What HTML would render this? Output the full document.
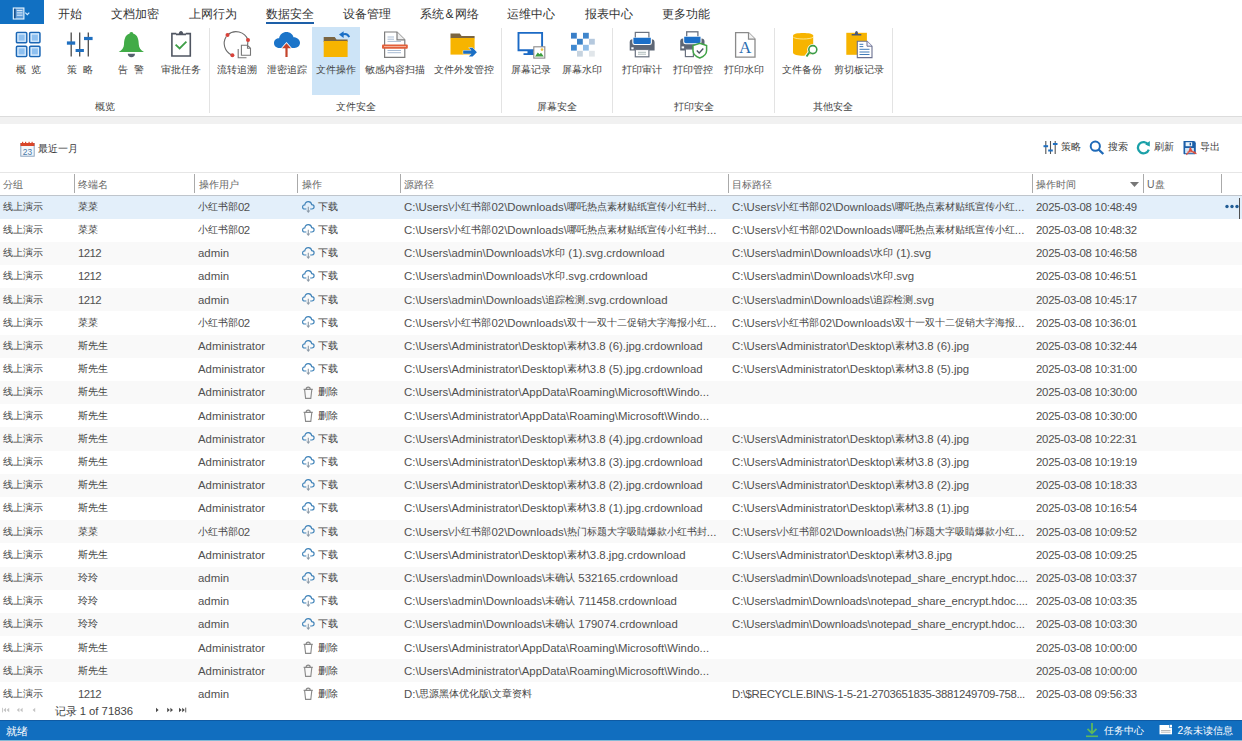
<!DOCTYPE html>
<html><head><meta charset="utf-8">
<style>
html,body{margin:0;padding:0}
body{width:1242px;height:741px;position:relative;overflow:hidden;background:#fff;font-family:"Liberation Sans",sans-serif;color:#333;}
.a{position:absolute;white-space:nowrap}
.menu{position:absolute;top:1.5px;font-size:12px;line-height:25px;color:#333;white-space:nowrap}
.rl{position:absolute;top:62.5px;font-size:10.4px;line-height:14px;color:#444;white-space:nowrap;text-align:center}
.gl{position:absolute;top:99.5px;font-size:10.4px;line-height:14px;color:#444;white-space:nowrap;text-align:center}
.sep{position:absolute;top:28px;width:1px;height:85px;background:#e3e3e3}
.ic{position:absolute}
.tb{position:absolute;top:141.5px;font-size:10.35px;line-height:14px;color:#3c3c3c;white-space:nowrap}
.hd{position:absolute;top:177.5px;font-size:10.4px;line-height:14px;color:#666;white-space:nowrap}
.hs{position:absolute;top:173.8px;width:1px;height:19px;background:#aaa}
.r{position:absolute;left:0;width:1242px;height:23.2px}
.r.alt{background:#f9f9f9}
.r.sel{background:#e3effa}
.c{position:absolute;top:4.4px;font-size:11.4px;line-height:14px;color:#505050;white-space:nowrap}
.c i{color:#454545;font-style:normal;font-size:10.35px;line-height:0;position:relative;top:-1px;letter-spacing:0}
.c.n{letter-spacing:-0.6px}
.c.dt{letter-spacing:-0.26px}
.r svg{position:absolute;left:302px;top:5px}
.r svg.dots{position:absolute;left:1224.5px;top:8.5px}
.focus{position:absolute;left:1238.8px;top:2px;width:1.3px;height:21.5px;background:#505050}
</style></head><body>
<!-- top menu -->
<div class="a" style="left:0;top:0;width:44px;height:23.8px;background:#1170c2"></div>
<svg class="a" style="left:12px;top:6.5px" width="20" height="13" viewBox="0 0 20 13">
 <rect x="1.3" y="1" width="10.6" height="11" fill="#5d9bd8" stroke="#e8f6ff" stroke-width="1.1"/>
 <rect x="2.2" y="1.7" width="1.3" height="9.6" fill="#0b3f78"/>
 <line x1="4.8" y1="3.6" x2="10.5" y2="3.6" stroke="#e0eefc" stroke-width="1"/>
 <line x1="4.8" y1="5.9" x2="10.5" y2="5.9" stroke="#e0eefc" stroke-width="1"/>
 <line x1="4.8" y1="8.2" x2="10.5" y2="8.2" stroke="#e0eefc" stroke-width="1"/>
 <path d="M13.3 5.6 L15.3 7.6 L17.3 5.6" fill="none" stroke="#cfe8ff" stroke-width="1.2"/>
</svg>
<span class="menu" style="left:58px">开始</span>
<span class="menu" style="left:111px">文档加密</span>
<span class="menu" style="left:189px">上网行为</span>
<span class="menu" style="left:266px">数据安全</span>
<div class="a" style="left:266px;top:21.5px;width:48px;height:2px;background:#1d5fa8"></div>
<span class="menu" style="left:343px">设备管理</span>
<span class="menu" style="left:420px">系统<span style="margin:0 1.6px">&amp;</span>网络</span>
<span class="menu" style="left:507px">运维中心</span>
<span class="menu" style="left:585px">报表中心</span>
<span class="menu" style="left:662px">更多功能</span>

<!-- ribbon -->
<div class="a" style="left:312.3px;top:26.6px;width:48px;height:68.7px;background:#cde4f7"></div>
<div class="sep" style="left:208.5px"></div>
<div class="sep" style="left:501px"></div>
<div class="sep" style="left:612px"></div>
<div class="sep" style="left:774px"></div>
<div class="sep" style="left:892px"></div>
<!-- icons -->
<svg class="ic" style="left:15px;top:31px" width="27" height="27" viewBox="0 0 27 27">
 <g fill="#8ec0f0" stroke="#1b66b4" stroke-width="1.4">
  <rect x="1.4" y="1.4" width="10.4" height="10.4" rx="1"/><rect x="14.6" y="1.4" width="10.4" height="10.4" rx="1"/>
  <rect x="1.4" y="15.2" width="10.4" height="10.4" rx="1"/><rect x="14.6" y="15.2" width="10.4" height="10.4" rx="1"/>
 </g>
 <g fill="none" stroke="#e8f3fd" stroke-width="1">
  <rect x="3" y="3" width="7.2" height="7.2"/><rect x="16.2" y="3" width="7.2" height="7.2"/>
  <rect x="3" y="16.8" width="7.2" height="7.2"/><rect x="16.2" y="16.8" width="7.2" height="7.2"/>
 </g>
</svg>
<svg class="ic" style="left:66px;top:32px" width="27" height="25" viewBox="0 0 27 25">
 <g stroke="#4a4a4a" stroke-width="1.3"><line x1="5.2" y1="0.5" x2="5.2" y2="24.4"/><line x1="13.7" y1="0.5" x2="13.7" y2="24.4"/><line x1="22.3" y1="0.5" x2="22.3" y2="24.4"/></g>
 <g fill="#1f6fc0"><rect x="0.9" y="9.4" width="8.3" height="3.3"/><rect x="9.6" y="17" width="8.3" height="3"/><rect x="18" y="4.9" width="8.6" height="3.2"/></g>
</svg>
<svg class="ic" style="left:118px;top:31px" width="27" height="27" viewBox="0 0 27 27">
 <path d="M13.4 1 C14.6 1 15.3 1.8 15.3 2.8 C19.8 4 20.6 8.5 20.8 13.5 C21 17 22.5 19 26 21.1 L0.7 21.1 C4.2 19 5.8 17 6 13.5 C6.2 8.5 7 4 11.5 2.8 C11.5 1.8 12.2 1 13.4 1 Z" fill="#41ab47"/>
 <path d="M9.8 22.8 L17 22.8 C17 25 15.5 26.2 13.4 26.2 C11.3 26.2 9.8 25 9.8 22.8 Z" fill="#55606e"/>
</svg>
<svg class="ic" style="left:170px;top:30px" width="22" height="28" viewBox="0 0 22 28">
 <path d="M6.3 3.6 H1.9 V26 H20.3 V3.6 H15.8" fill="none" stroke="#4f5561" stroke-width="1.6"/>
 <path d="M6 5.3 V3.5 H8.8 C9 2.2 9.8 1 11 1 C12.2 1 13 2.2 13.2 3.5 H16 V5.3 Z" fill="#4f5561"/>
 <path d="M5.6 14.6 L9.6 18.4 L16.4 11.6" fill="none" stroke="#3e9e47" stroke-width="1.8"/>
</svg>
<svg class="ic" style="left:222px;top:30px" width="30" height="29" viewBox="0 0 30 29">
 <path d="M5.5 5 A12.7 12.7 0 0 1 26 10" fill="none" stroke="#6b6b6b" stroke-width="1.1"/>
 <path d="M4.3 6.5 A12.7 12.7 0 0 0 9.6 25" fill="none" stroke="#6b6b6b" stroke-width="1.1"/>
 <path d="M26 10 L25.6 15" fill="none" stroke="#6b6b6b" stroke-width="1.1"/>
 <g fill="#d8423a"><circle cx="5.5" cy="5" r="2"/><circle cx="26" cy="10.1" r="2"/><circle cx="10.4" cy="25.3" r="2"/></g>
 <path d="M16.2 19 V27.8 H24.5" fill="none" stroke="#777" stroke-width="1.1"/>
 <path d="M19.4 15.2 H25.5 L28.5 18.2 V25.3 H19.4 Z M25.5 15.2 V18.2 H28.5" fill="#fff" stroke="#777" stroke-width="1.1"/>
</svg>
<svg class="ic" style="left:273px;top:31px" width="28" height="27" viewBox="0 0 28 27">
 <path d="M6.5 17 C2.8 17 1 14.6 1 12 C1 9.2 3.2 7 6.1 7.2 C6.8 3.4 9.8 1 13.5 1 C17 1 19.6 3.2 20.5 6.2 C24.2 6.2 27 8.7 27 11.8 C27 14.8 24.6 17 21.5 17 Z" fill="#1b74c9"/>
 <path d="M13.5 11 L19.5 17.8 L15.4 17.8 L15.4 26.5 L11.6 26.5 L11.6 17.8 L7.5 17.8 Z" fill="#fff"/>
 <path d="M13.5 12.3 L18 17.3 L14.6 17.3 L14.6 26 L12.4 26 L12.4 17.3 L9 17.3 Z" fill="#c4442b"/>
</svg>
<svg class="ic" style="left:322px;top:30px" width="30" height="28" viewBox="0 0 30 28">
 <path d="M1.7 6.9 H12.7 L14.5 9.6 H25.6 V12 H1.7 Z" fill="#7b6541"/>
 <rect x="1.7" y="11" width="23.9" height="16" fill="#f7b400"/>
 <path d="M27.2 7.2 C26.2 4.5 23.5 3.5 20.5 4.5" fill="none" stroke="#1b6fc6" stroke-width="1.9"/>
 <path d="M17 4.6 L21.6 1.2 L21.6 8 Z" fill="#1b6fc6"/>
</svg>
<svg class="ic" style="left:381px;top:31px" width="28" height="28" viewBox="0 0 28 28">
 <path d="M3.6 1 H16 L23.8 8.8 V26.3 H3.6 Z" fill="#fff" stroke="#7d7d7d" stroke-width="1.2"/>
 <path d="M16 1 V8.8 H23.8" fill="#eee" stroke="#7d7d7d" stroke-width="1.2"/>
 <g stroke="#a9bcd3" stroke-width="1"><line x1="6.5" y1="6" x2="13" y2="6"/><line x1="6.5" y1="8.2" x2="13" y2="8.2"/><line x1="6.5" y1="10.4" x2="20" y2="10.4"/><line x1="6.5" y1="19.5" x2="20" y2="19.5"/><line x1="6.5" y1="21.7" x2="20" y2="21.7"/></g>
 <rect x="1" y="13.4" width="25.8" height="4.3" rx="1" fill="#e2603b"/>
 <line x1="3" y1="15.5" x2="25" y2="15.5" stroke="#f4b9a5" stroke-width="0.9"/>
</svg>
<svg class="ic" style="left:449px;top:32px" width="30" height="27" viewBox="0 0 30 27">
 <path d="M1.5 1.6 H10.8 L12.6 4 H25.6 V6.2 H1.5 Z" fill="#7b6541"/>
 <rect x="1.5" y="6" width="24.1" height="16.6" fill="#f7b400"/>
 <path d="M14.2 18.6 H22.5 L19.8 15.8 H23.6 L27.9 20.2 L23.6 24.6 H19.8 L22.5 21.8 H14.2 Z" fill="#1b6fc6" stroke="#fff" stroke-width="0.9" paint-order="stroke"/>
</svg>
<svg class="ic" style="left:516px;top:31px" width="30" height="28" viewBox="0 0 30 28">
 <path d="M2.5 1.9 H26.1 V19.2 H2.5 Z" fill="#fff" stroke="#1b6ac5" stroke-width="1.9"/>
 <rect x="11.5" y="19" width="6" height="4" fill="#1b6ac5"/>
 <rect x="7.5" y="22.2" width="11" height="1.8" fill="#1b6ac5"/>
 <rect x="17.8" y="15.8" width="11" height="11.3" fill="#fff" stroke="#8a8a8a" stroke-width="1.1"/>
 <path d="M19 25.6 L21.8 21.5 L23.5 23.3 L25 21.8 L27.8 25.6 Z" fill="#3e9e3e"/>
 <circle cx="26" cy="18.6" r="1.3" fill="#f0c040"/>
</svg>
<svg class="ic" style="left:570px;top:32px" width="26" height="26" viewBox="0 0 26 26">
 <rect x="1" y="0.8" width="5.8" height="5.8" fill="#3a7fc8"/><rect x="13" y="0.8" width="5.8" height="5.8" fill="#3f86cc"/>
 <rect x="7" y="6.8" width="5.8" height="5.8" fill="#3a82c8"/><rect x="19" y="6.8" width="5.8" height="5.8" fill="#b5c9de"/>
 <rect x="1" y="12.8" width="5.8" height="5.8" fill="#4089d0"/><rect x="13" y="12.8" width="5.8" height="5.8" fill="#8fbde8"/>
 <rect x="7" y="18.8" width="5.8" height="5.8" fill="#c6d3df"/><rect x="19" y="18.8" width="5.8" height="5.8" fill="#e1e6ea"/>
</svg>
<svg class="ic" style="left:628px;top:31px" width="28" height="27" viewBox="0 0 28 27">
 <rect x="7.3" y="1.4" width="13.6" height="7" fill="#fff" stroke="#6a7280" stroke-width="1.2"/>
 <path d="M1.7 11.5 Q1.7 8.3 4.5 8.3 H23.5 Q26.6 8.3 26.6 11.5 V19.6 H1.7 Z" fill="#5d6675"/>
 <path d="M4.3 6.6 H23.9 V11.8 Q23.9 14 21.6 14 H6.6 Q4.3 14 4.3 11.8 Z" fill="#fff"/>
 <path d="M5.4 6.7 H22.8 V11.5 Q22.8 13 21.3 13 H6.9 Q5.4 13 5.4 11.5 Z" fill="#1b6fc8"/>
 <rect x="3.3" y="16.3" width="2.3" height="2" fill="#fff"/>
 <rect x="7.3" y="18.5" width="13.6" height="7.3" fill="#fff" stroke="#6a7280" stroke-width="1.2"/>
 <line x1="10" y1="21.3" x2="18" y2="21.3" stroke="#9aa" stroke-width="0.8"/><line x1="10" y1="23.2" x2="18" y2="23.2" stroke="#9aa" stroke-width="0.8"/>
</svg>
<svg class="ic" style="left:679px;top:30px" width="30" height="29" viewBox="0 0 30 29">
 <rect x="7.7" y="1.8" width="11.2" height="7" fill="#fff" stroke="#6a7280" stroke-width="1.3"/>
 <path d="M1.2 11.5 Q1.2 8.6 3.8 8.6 H22.6 Q25.5 8.6 25.5 11.5 V20.6 H1.2 Z" fill="#5d6675"/>
 <path d="M4.2 6.3 H22.5 V12 Q22.5 14.3 20.2 14.3 H6.5 Q4.2 14.3 4.2 12 Z" fill="#fff"/>
 <path d="M5.2 6.8 H21.5 V11.6 Q21.5 13.3 19.8 13.3 H6.9 Q5.2 13.3 5.2 11.6 Z" fill="#1b6fc8"/>
 <rect x="2.6" y="16.4" width="2.5" height="2" fill="#fff"/>
 <rect x="6.4" y="19" width="8" height="7.6" fill="#fff" stroke="#6a7280" stroke-width="1.2"/>
 <path d="M20.8 13.2 L27.6 15.6 V20.5 C27.6 24.2 25 26.4 20.8 28 C16.6 26.4 14 24.2 14 20.5 V15.6 Z" fill="#fff" stroke="#41a447" stroke-width="1.5"/>
 <path d="M17.8 20.6 L20.2 23 L24.3 18.6" fill="none" stroke="#4b5462" stroke-width="1.4"/>
</svg>
<svg class="ic" style="left:734px;top:31px" width="23" height="28" viewBox="0 0 23 28">
 <path d="M1.6 1.6 H14.5 L21 8.1 V26.1 H1.6 Z" fill="#fff" stroke="#8a8a8a" stroke-width="1.3"/>
 <path d="M14.5 1.6 V8.1 H21" fill="#f2f2f2" stroke="#8a8a8a" stroke-width="1.2"/>
 <text x="11.2" y="22" text-anchor="middle" font-family="Liberation Serif" font-size="17" fill="#2a6cb0">A</text>
</svg>
<svg class="ic" style="left:791px;top:31px" width="30" height="28" viewBox="0 0 30 28">
 <path d="M2 4.5 C2 1.2 22.2 1.2 22.2 4.5 V21.5 C22.2 25.8 2 25.8 2 21.5 Z" fill="#f7b400"/>
 <path d="M2.3 6.2 C5 8.6 19.2 8.6 22 6.2" fill="none" stroke="#fde68a" stroke-width="1"/>
 <line x1="18.3" y1="21.5" x2="14.8" y2="26.2" stroke="#fff" stroke-width="3.6"/>
 <circle cx="21.8" cy="18.6" r="5.6" fill="#fff"/>
 <line x1="18.3" y1="21.5" x2="15.5" y2="25.5" stroke="#3c9c46" stroke-width="2"/>
 <circle cx="21.8" cy="18.6" r="4" fill="#fff" stroke="#3c9c46" stroke-width="1.6"/>
</svg>
<svg class="ic" style="left:845px;top:30px" width="29" height="29" viewBox="0 0 29 29">
 <rect x="1.3" y="2.8" width="20.6" height="22" fill="#f7b400"/>
 <path d="M6.7 5.6 V4 H9.8 C10 2.2 10.7 1 11.5 1 C12.3 1 13 2.2 13.2 4 H16.3 V5.6 Z" fill="#4a5878"/>
 <path d="M12.3 11.2 H22 L27 16.2 V27.6 H12.3 Z" fill="#fff" stroke="#6a7090" stroke-width="1.1"/>
 <path d="M22 11.2 V16.2 H27" fill="#eef" stroke="#6a7090" stroke-width="1"/>
 <g stroke="#2a6cb0" stroke-width="0.9"><line x1="14.5" y1="14.3" x2="18.3" y2="14.3"/><line x1="14.5" y1="16.6" x2="18.3" y2="16.6"/><line x1="14.5" y1="19.3" x2="24.5" y2="19.3"/><line x1="14.5" y1="22" x2="24.5" y2="22"/><line x1="14.5" y1="24.5" x2="24.5" y2="24.5"/></g>
</svg>
<!-- ribbon labels -->
<span class="rl" style="left:15px;width:27px">概&nbsp;&nbsp;览</span>
<span class="rl" style="left:66px;width:28px">策&nbsp;&nbsp;略</span>
<span class="rl" style="left:117px;width:28px">告&nbsp;&nbsp;警</span>
<span class="rl" style="left:160px;width:42px">审批任务</span>
<span class="rl" style="left:216px;width:42px">流转追溯</span>
<span class="rl" style="left:266px;width:42px">泄密追踪</span>
<span class="rl" style="left:315px;width:42px">文件操作</span>
<span class="rl" style="left:363px;width:63px">敏感内容扫描</span>
<span class="rl" style="left:432px;width:63px">文件外发管控</span>
<span class="rl" style="left:510px;width:42px">屏幕记录</span>
<span class="rl" style="left:561px;width:42px">屏幕水印</span>
<span class="rl" style="left:621px;width:42px">打印审计</span>
<span class="rl" style="left:672px;width:42px">打印管控</span>
<span class="rl" style="left:723px;width:42px">打印水印</span>
<span class="rl" style="left:781px;width:42px">文件备份</span>
<span class="rl" style="left:833px;width:52px">剪切板记录</span>
<span class="gl" style="left:94px;width:21px">概览</span>
<span class="gl" style="left:334.5px;width:42px">文件安全</span>
<span class="gl" style="left:536px;width:42px">屏幕安全</span>
<span class="gl" style="left:673px;width:42px">打印安全</span>
<span class="gl" style="left:812px;width:42px">其他安全</span>
<!-- gray band -->
<div class="a" style="left:0;top:116px;width:1242px;height:1px;background:#dcdcdc"></div>
<div class="a" style="left:0;top:117px;width:1242px;height:6.5px;background:#f1f1f1"></div>
<!-- toolbar -->
<svg class="ic" style="left:20px;top:141px" width="15" height="16" viewBox="0 0 15 16">
 <rect x="0.8" y="2.5" width="13.4" height="12.7" fill="#f4f8fc" stroke="#8aa4c0" stroke-width="1"/>
 <rect x="0.5" y="2" width="14" height="3" fill="#d9472b"/>
 <g fill="#d9472b"><rect x="2" y="0.8" width="1.2" height="1.5"/><rect x="5" y="0.8" width="1.2" height="1.5"/><rect x="8.5" y="0.8" width="1.2" height="1.5"/><rect x="11.5" y="0.8" width="1.2" height="1.5"/></g>
 <text x="7.5" y="13.6" text-anchor="middle" font-family="Liberation Sans" font-size="8.4" fill="#4a7aa8">23</text>
</svg>
<span class="tb" style="left:38px">最近一月</span>
<svg class="ic" style="left:1043px;top:140px" width="15" height="15" viewBox="0 0 15 15">
 <g stroke="#555" stroke-width="1.1"><line x1="2.8" y1="1" x2="2.8" y2="14"/><line x1="7.5" y1="1" x2="7.5" y2="14"/><line x1="12.2" y1="1" x2="12.2" y2="14"/></g>
 <g fill="#1f6fc0"><rect x="0.5" y="5.2" width="4.6" height="2"/><rect x="5.2" y="9.5" width="4.6" height="2"/><rect x="9.9" y="3" width="4.6" height="2"/></g>
</svg>
<span class="tb" style="left:1061px;top:140.3px">策略</span>
<svg class="ic" style="left:1089px;top:140px" width="16" height="15" viewBox="0 0 16 15">
 <circle cx="6.3" cy="6.2" r="4.6" fill="none" stroke="#1f6ab8" stroke-width="2"/>
 <line x1="9.6" y1="9.5" x2="14.3" y2="14" stroke="#1f6ab8" stroke-width="2.4"/>
</svg>
<span class="tb" style="left:1107.5px;top:140.3px">搜索</span>
<svg class="ic" style="left:1136px;top:140px" width="15" height="15" viewBox="0 0 15 15">
 <path d="M12.2 4.6 A5.6 5.6 0 1 0 12.8 9.6" fill="none" stroke="#1aa0a8" stroke-width="2.3"/>
 <path d="M9.2 4.5 L13.8 1 L13.8 6.5 Z" fill="#1aa0a8"/>
</svg>
<span class="tb" style="left:1153.5px;top:140.3px">刷新</span>
<svg class="ic" style="left:1182px;top:140px" width="16" height="16" viewBox="0 0 16 16">
 <path d="M1.5 1 H11.5 Q13.8 1 13.8 3.3 V13.5 Q13.8 14.3 13 14.3 H2.3 Q1.5 14.3 1.5 13.5 Z" fill="#1c5fa9"/>
 <rect x="3.6" y="2.2" width="6.6" height="4" fill="#e9f3fb"/><rect x="7.6" y="2.8" width="1.4" height="2.6" fill="#1c5fa9"/>
 <rect x="3.1" y="8" width="8.8" height="5.2" fill="#cfe6f8"/>
 <path d="M8.3 7.3 C8.8 10.5 10.5 13 14.5 13.6 M8.3 7.3 C8 10.4 6.8 12.8 4.3 14.6 M5.5 12.2 C8.2 11.4 11 11.6 13.6 12.4" fill="none" stroke="#e0503c" stroke-width="1.3"/>
</svg>
<span class="tb" style="left:1199.5px;top:140.3px">导出</span>
<!-- table header -->
<div class="a" style="left:0;top:172px;width:1242px;height:1px;background:#e6e6e6"></div>
<div class="a" style="left:0;top:194.5px;width:1242px;height:1.1px;background:#bfc5cc"></div>
<div class="hs" style="left:74.3px"></div>
<div class="hs" style="left:194.3px"></div>
<div class="hs" style="left:297.3px"></div>
<div class="hs" style="left:400px"></div>
<div class="hs" style="left:728.3px"></div>
<div class="hs" style="left:1032px"></div>
<div class="hs" style="left:1143px"></div>
<div class="hs" style="left:1221px"></div>
<span class="hd" style="left:3px">分组</span>
<span class="hd" style="left:78px">终端名</span>
<span class="hd" style="left:198.5px">操作用户</span>
<span class="hd" style="left:301.5px">操作</span>
<span class="hd" style="left:404px">源路径</span>
<span class="hd" style="left:732px">目标路径</span>
<span class="hd" style="left:1036px">操作时间</span>
<span class="hd" style="left:1147px">U盘</span>
<svg class="ic" style="left:1129.5px;top:181.5px" width="9" height="5" viewBox="0 0 9 5"><path d="M0 0 H9 L4.5 5 Z" fill="#777"/></svg>

<div class="r sel" style="top:195.50px">
<span class="c" style="left:3px"><i>线上演示</i></span>
<span class="c n" style="left:78px"><i>菜菜</i></span>
<span class="c n" style="left:198px"><i>小红书部</i>02</span>
<svg width="13" height="13" viewBox="0 0 13 13"><path d="M4.4 8 H2.6 C1.1 8 0.6 6.9 0.6 5.9 C0.6 4.6 1.6 3.8 2.8 3.9 C3.1 1.8 4.6 0.6 6.3 0.6 C8.1 0.6 9.4 1.8 9.7 3.6 C11.1 3.6 12.1 4.6 12.1 5.8 C12.1 7 11.1 8 9.8 8 H8.2" fill="none" stroke="#3f82b8" stroke-width="1.15"/><path d="M6.3 5.8 V10" stroke="#8b9aa8" stroke-width="1.1"/><path d="M4.3 9.4 H8.3 L6.3 11.9 Z" fill="#8b9aa8"/></svg><span class="c" style="left:318px"><i>下载</i></span>
<span class="c" style="left:404px">C:\Users\<i>小红书部</i>02\Downloads\<i>哪吒热点素材贴纸宣传小红书封</i>...</span>
<span class="c" style="left:732px">C:\Users\<i>小红书部</i>02\Downloads\<i>哪吒热点素材贴纸宣传小红</i>...</span>
<span class="c dt" style="left:1036px">2025-03-08 10:48:49</span>
<svg class="dots" width="14" height="5" viewBox="0 0 14 5"><g fill="#205c94"><circle cx="2" cy="2.5" r="1.7"/><circle cx="7" cy="2.5" r="1.7"/><circle cx="12" cy="2.5" r="1.7"/></g></svg><div class="focus"></div>
</div>
<div class="r" style="top:218.69px">
<span class="c" style="left:3px"><i>线上演示</i></span>
<span class="c n" style="left:78px"><i>菜菜</i></span>
<span class="c n" style="left:198px"><i>小红书部</i>02</span>
<svg width="13" height="13" viewBox="0 0 13 13"><path d="M4.4 8 H2.6 C1.1 8 0.6 6.9 0.6 5.9 C0.6 4.6 1.6 3.8 2.8 3.9 C3.1 1.8 4.6 0.6 6.3 0.6 C8.1 0.6 9.4 1.8 9.7 3.6 C11.1 3.6 12.1 4.6 12.1 5.8 C12.1 7 11.1 8 9.8 8 H8.2" fill="none" stroke="#3f82b8" stroke-width="1.15"/><path d="M6.3 5.8 V10" stroke="#8b9aa8" stroke-width="1.1"/><path d="M4.3 9.4 H8.3 L6.3 11.9 Z" fill="#8b9aa8"/></svg><span class="c" style="left:318px"><i>下载</i></span>
<span class="c" style="left:404px">C:\Users\<i>小红书部</i>02\Downloads\<i>哪吒热点素材贴纸宣传小红书封</i>...</span>
<span class="c" style="left:732px">C:\Users\<i>小红书部</i>02\Downloads\<i>哪吒热点素材贴纸宣传小红</i>...</span>
<span class="c dt" style="left:1036px">2025-03-08 10:48:32</span>
</div>
<div class="r alt" style="top:241.88px">
<span class="c" style="left:3px"><i>线上演示</i></span>
<span class="c n" style="left:78px">1212</span>
<span class="c" style="left:198px">admin</span>
<svg width="13" height="13" viewBox="0 0 13 13"><path d="M4.4 8 H2.6 C1.1 8 0.6 6.9 0.6 5.9 C0.6 4.6 1.6 3.8 2.8 3.9 C3.1 1.8 4.6 0.6 6.3 0.6 C8.1 0.6 9.4 1.8 9.7 3.6 C11.1 3.6 12.1 4.6 12.1 5.8 C12.1 7 11.1 8 9.8 8 H8.2" fill="none" stroke="#3f82b8" stroke-width="1.15"/><path d="M6.3 5.8 V10" stroke="#8b9aa8" stroke-width="1.1"/><path d="M4.3 9.4 H8.3 L6.3 11.9 Z" fill="#8b9aa8"/></svg><span class="c" style="left:318px"><i>下载</i></span>
<span class="c" style="left:404px">C:\Users\admin\Downloads\<i>水印</i> (1).svg.crdownload</span>
<span class="c" style="left:732px">C:\Users\admin\Downloads\<i>水印</i> (1).svg</span>
<span class="c dt" style="left:1036px">2025-03-08 10:46:58</span>
</div>
<div class="r" style="top:265.07px">
<span class="c" style="left:3px"><i>线上演示</i></span>
<span class="c n" style="left:78px">1212</span>
<span class="c" style="left:198px">admin</span>
<svg width="13" height="13" viewBox="0 0 13 13"><path d="M4.4 8 H2.6 C1.1 8 0.6 6.9 0.6 5.9 C0.6 4.6 1.6 3.8 2.8 3.9 C3.1 1.8 4.6 0.6 6.3 0.6 C8.1 0.6 9.4 1.8 9.7 3.6 C11.1 3.6 12.1 4.6 12.1 5.8 C12.1 7 11.1 8 9.8 8 H8.2" fill="none" stroke="#3f82b8" stroke-width="1.15"/><path d="M6.3 5.8 V10" stroke="#8b9aa8" stroke-width="1.1"/><path d="M4.3 9.4 H8.3 L6.3 11.9 Z" fill="#8b9aa8"/></svg><span class="c" style="left:318px"><i>下载</i></span>
<span class="c" style="left:404px">C:\Users\admin\Downloads\<i>水印</i>.svg.crdownload</span>
<span class="c" style="left:732px">C:\Users\admin\Downloads\<i>水印</i>.svg</span>
<span class="c dt" style="left:1036px">2025-03-08 10:46:51</span>
</div>
<div class="r alt" style="top:288.26px">
<span class="c" style="left:3px"><i>线上演示</i></span>
<span class="c n" style="left:78px">1212</span>
<span class="c" style="left:198px">admin</span>
<svg width="13" height="13" viewBox="0 0 13 13"><path d="M4.4 8 H2.6 C1.1 8 0.6 6.9 0.6 5.9 C0.6 4.6 1.6 3.8 2.8 3.9 C3.1 1.8 4.6 0.6 6.3 0.6 C8.1 0.6 9.4 1.8 9.7 3.6 C11.1 3.6 12.1 4.6 12.1 5.8 C12.1 7 11.1 8 9.8 8 H8.2" fill="none" stroke="#3f82b8" stroke-width="1.15"/><path d="M6.3 5.8 V10" stroke="#8b9aa8" stroke-width="1.1"/><path d="M4.3 9.4 H8.3 L6.3 11.9 Z" fill="#8b9aa8"/></svg><span class="c" style="left:318px"><i>下载</i></span>
<span class="c" style="left:404px">C:\Users\admin\Downloads\<i>追踪检测</i>.svg.crdownload</span>
<span class="c" style="left:732px">C:\Users\admin\Downloads\<i>追踪检测</i>.svg</span>
<span class="c dt" style="left:1036px">2025-03-08 10:45:17</span>
</div>
<div class="r" style="top:311.45px">
<span class="c" style="left:3px"><i>线上演示</i></span>
<span class="c n" style="left:78px"><i>菜菜</i></span>
<span class="c n" style="left:198px"><i>小红书部</i>02</span>
<svg width="13" height="13" viewBox="0 0 13 13"><path d="M4.4 8 H2.6 C1.1 8 0.6 6.9 0.6 5.9 C0.6 4.6 1.6 3.8 2.8 3.9 C3.1 1.8 4.6 0.6 6.3 0.6 C8.1 0.6 9.4 1.8 9.7 3.6 C11.1 3.6 12.1 4.6 12.1 5.8 C12.1 7 11.1 8 9.8 8 H8.2" fill="none" stroke="#3f82b8" stroke-width="1.15"/><path d="M6.3 5.8 V10" stroke="#8b9aa8" stroke-width="1.1"/><path d="M4.3 9.4 H8.3 L6.3 11.9 Z" fill="#8b9aa8"/></svg><span class="c" style="left:318px"><i>下载</i></span>
<span class="c" style="left:404px">C:\Users\<i>小红书部</i>02\Downloads\<i>双十一双十二促销大字海报小红</i>...</span>
<span class="c" style="left:732px">C:\Users\<i>小红书部</i>02\Downloads\<i>双十一双十二促销大字海报</i>...</span>
<span class="c dt" style="left:1036px">2025-03-08 10:36:01</span>
</div>
<div class="r alt" style="top:334.64px">
<span class="c" style="left:3px"><i>线上演示</i></span>
<span class="c n" style="left:78px"><i>斯先生</i></span>
<span class="c" style="left:198px">Administrator</span>
<svg width="13" height="13" viewBox="0 0 13 13"><path d="M4.4 8 H2.6 C1.1 8 0.6 6.9 0.6 5.9 C0.6 4.6 1.6 3.8 2.8 3.9 C3.1 1.8 4.6 0.6 6.3 0.6 C8.1 0.6 9.4 1.8 9.7 3.6 C11.1 3.6 12.1 4.6 12.1 5.8 C12.1 7 11.1 8 9.8 8 H8.2" fill="none" stroke="#3f82b8" stroke-width="1.15"/><path d="M6.3 5.8 V10" stroke="#8b9aa8" stroke-width="1.1"/><path d="M4.3 9.4 H8.3 L6.3 11.9 Z" fill="#8b9aa8"/></svg><span class="c" style="left:318px"><i>下载</i></span>
<span class="c" style="left:404px">C:\Users\Administrator\Desktop\<i>素材</i>\3.8 (6).jpg.crdownload</span>
<span class="c" style="left:732px">C:\Users\Administrator\Desktop\<i>素材</i>\3.8 (6).jpg</span>
<span class="c dt" style="left:1036px">2025-03-08 10:32:44</span>
</div>
<div class="r" style="top:357.83px">
<span class="c" style="left:3px"><i>线上演示</i></span>
<span class="c n" style="left:78px"><i>斯先生</i></span>
<span class="c" style="left:198px">Administrator</span>
<svg width="13" height="13" viewBox="0 0 13 13"><path d="M4.4 8 H2.6 C1.1 8 0.6 6.9 0.6 5.9 C0.6 4.6 1.6 3.8 2.8 3.9 C3.1 1.8 4.6 0.6 6.3 0.6 C8.1 0.6 9.4 1.8 9.7 3.6 C11.1 3.6 12.1 4.6 12.1 5.8 C12.1 7 11.1 8 9.8 8 H8.2" fill="none" stroke="#3f82b8" stroke-width="1.15"/><path d="M6.3 5.8 V10" stroke="#8b9aa8" stroke-width="1.1"/><path d="M4.3 9.4 H8.3 L6.3 11.9 Z" fill="#8b9aa8"/></svg><span class="c" style="left:318px"><i>下载</i></span>
<span class="c" style="left:404px">C:\Users\Administrator\Desktop\<i>素材</i>\3.8 (5).jpg.crdownload</span>
<span class="c" style="left:732px">C:\Users\Administrator\Desktop\<i>素材</i>\3.8 (5).jpg</span>
<span class="c dt" style="left:1036px">2025-03-08 10:31:00</span>
</div>
<div class="r alt" style="top:381.02px">
<span class="c" style="left:3px"><i>线上演示</i></span>
<span class="c n" style="left:78px"><i>斯先生</i></span>
<span class="c" style="left:198px">Administrator</span>
<svg width="13" height="14" viewBox="0 0 13 14"><path d="M1.6 3.4 H10.8 M4.1 3.3 C4.1 1.8 5 1.1 6.2 1.1 C7.4 1.1 8.3 1.8 8.3 3.3 M2.6 3.6 L3.6 12.4 H8.8 L9.8 3.6" fill="none" stroke="#8a8a8a" stroke-width="1.1"/></svg><span class="c" style="left:318px"><i>删除</i></span>
<span class="c" style="left:404px">C:\Users\Administrator\AppData\Roaming\Microsoft\Windo...</span>
<span class="c" style="left:732px"></span>
<span class="c dt" style="left:1036px">2025-03-08 10:30:00</span>
</div>
<div class="r" style="top:404.21px">
<span class="c" style="left:3px"><i>线上演示</i></span>
<span class="c n" style="left:78px"><i>斯先生</i></span>
<span class="c" style="left:198px">Administrator</span>
<svg width="13" height="14" viewBox="0 0 13 14"><path d="M1.6 3.4 H10.8 M4.1 3.3 C4.1 1.8 5 1.1 6.2 1.1 C7.4 1.1 8.3 1.8 8.3 3.3 M2.6 3.6 L3.6 12.4 H8.8 L9.8 3.6" fill="none" stroke="#8a8a8a" stroke-width="1.1"/></svg><span class="c" style="left:318px"><i>删除</i></span>
<span class="c" style="left:404px">C:\Users\Administrator\AppData\Roaming\Microsoft\Windo...</span>
<span class="c" style="left:732px"></span>
<span class="c dt" style="left:1036px">2025-03-08 10:30:00</span>
</div>
<div class="r alt" style="top:427.40px">
<span class="c" style="left:3px"><i>线上演示</i></span>
<span class="c n" style="left:78px"><i>斯先生</i></span>
<span class="c" style="left:198px">Administrator</span>
<svg width="13" height="13" viewBox="0 0 13 13"><path d="M4.4 8 H2.6 C1.1 8 0.6 6.9 0.6 5.9 C0.6 4.6 1.6 3.8 2.8 3.9 C3.1 1.8 4.6 0.6 6.3 0.6 C8.1 0.6 9.4 1.8 9.7 3.6 C11.1 3.6 12.1 4.6 12.1 5.8 C12.1 7 11.1 8 9.8 8 H8.2" fill="none" stroke="#3f82b8" stroke-width="1.15"/><path d="M6.3 5.8 V10" stroke="#8b9aa8" stroke-width="1.1"/><path d="M4.3 9.4 H8.3 L6.3 11.9 Z" fill="#8b9aa8"/></svg><span class="c" style="left:318px"><i>下载</i></span>
<span class="c" style="left:404px">C:\Users\Administrator\Desktop\<i>素材</i>\3.8 (4).jpg.crdownload</span>
<span class="c" style="left:732px">C:\Users\Administrator\Desktop\<i>素材</i>\3.8 (4).jpg</span>
<span class="c dt" style="left:1036px">2025-03-08 10:22:31</span>
</div>
<div class="r" style="top:450.59px">
<span class="c" style="left:3px"><i>线上演示</i></span>
<span class="c n" style="left:78px"><i>斯先生</i></span>
<span class="c" style="left:198px">Administrator</span>
<svg width="13" height="13" viewBox="0 0 13 13"><path d="M4.4 8 H2.6 C1.1 8 0.6 6.9 0.6 5.9 C0.6 4.6 1.6 3.8 2.8 3.9 C3.1 1.8 4.6 0.6 6.3 0.6 C8.1 0.6 9.4 1.8 9.7 3.6 C11.1 3.6 12.1 4.6 12.1 5.8 C12.1 7 11.1 8 9.8 8 H8.2" fill="none" stroke="#3f82b8" stroke-width="1.15"/><path d="M6.3 5.8 V10" stroke="#8b9aa8" stroke-width="1.1"/><path d="M4.3 9.4 H8.3 L6.3 11.9 Z" fill="#8b9aa8"/></svg><span class="c" style="left:318px"><i>下载</i></span>
<span class="c" style="left:404px">C:\Users\Administrator\Desktop\<i>素材</i>\3.8 (3).jpg.crdownload</span>
<span class="c" style="left:732px">C:\Users\Administrator\Desktop\<i>素材</i>\3.8 (3).jpg</span>
<span class="c dt" style="left:1036px">2025-03-08 10:19:19</span>
</div>
<div class="r alt" style="top:473.78px">
<span class="c" style="left:3px"><i>线上演示</i></span>
<span class="c n" style="left:78px"><i>斯先生</i></span>
<span class="c" style="left:198px">Administrator</span>
<svg width="13" height="13" viewBox="0 0 13 13"><path d="M4.4 8 H2.6 C1.1 8 0.6 6.9 0.6 5.9 C0.6 4.6 1.6 3.8 2.8 3.9 C3.1 1.8 4.6 0.6 6.3 0.6 C8.1 0.6 9.4 1.8 9.7 3.6 C11.1 3.6 12.1 4.6 12.1 5.8 C12.1 7 11.1 8 9.8 8 H8.2" fill="none" stroke="#3f82b8" stroke-width="1.15"/><path d="M6.3 5.8 V10" stroke="#8b9aa8" stroke-width="1.1"/><path d="M4.3 9.4 H8.3 L6.3 11.9 Z" fill="#8b9aa8"/></svg><span class="c" style="left:318px"><i>下载</i></span>
<span class="c" style="left:404px">C:\Users\Administrator\Desktop\<i>素材</i>\3.8 (2).jpg.crdownload</span>
<span class="c" style="left:732px">C:\Users\Administrator\Desktop\<i>素材</i>\3.8 (2).jpg</span>
<span class="c dt" style="left:1036px">2025-03-08 10:18:33</span>
</div>
<div class="r" style="top:496.97px">
<span class="c" style="left:3px"><i>线上演示</i></span>
<span class="c n" style="left:78px"><i>斯先生</i></span>
<span class="c" style="left:198px">Administrator</span>
<svg width="13" height="13" viewBox="0 0 13 13"><path d="M4.4 8 H2.6 C1.1 8 0.6 6.9 0.6 5.9 C0.6 4.6 1.6 3.8 2.8 3.9 C3.1 1.8 4.6 0.6 6.3 0.6 C8.1 0.6 9.4 1.8 9.7 3.6 C11.1 3.6 12.1 4.6 12.1 5.8 C12.1 7 11.1 8 9.8 8 H8.2" fill="none" stroke="#3f82b8" stroke-width="1.15"/><path d="M6.3 5.8 V10" stroke="#8b9aa8" stroke-width="1.1"/><path d="M4.3 9.4 H8.3 L6.3 11.9 Z" fill="#8b9aa8"/></svg><span class="c" style="left:318px"><i>下载</i></span>
<span class="c" style="left:404px">C:\Users\Administrator\Desktop\<i>素材</i>\3.8 (1).jpg.crdownload</span>
<span class="c" style="left:732px">C:\Users\Administrator\Desktop\<i>素材</i>\3.8 (1).jpg</span>
<span class="c dt" style="left:1036px">2025-03-08 10:16:54</span>
</div>
<div class="r alt" style="top:520.16px">
<span class="c" style="left:3px"><i>线上演示</i></span>
<span class="c n" style="left:78px"><i>菜菜</i></span>
<span class="c n" style="left:198px"><i>小红书部</i>02</span>
<svg width="13" height="13" viewBox="0 0 13 13"><path d="M4.4 8 H2.6 C1.1 8 0.6 6.9 0.6 5.9 C0.6 4.6 1.6 3.8 2.8 3.9 C3.1 1.8 4.6 0.6 6.3 0.6 C8.1 0.6 9.4 1.8 9.7 3.6 C11.1 3.6 12.1 4.6 12.1 5.8 C12.1 7 11.1 8 9.8 8 H8.2" fill="none" stroke="#3f82b8" stroke-width="1.15"/><path d="M6.3 5.8 V10" stroke="#8b9aa8" stroke-width="1.1"/><path d="M4.3 9.4 H8.3 L6.3 11.9 Z" fill="#8b9aa8"/></svg><span class="c" style="left:318px"><i>下载</i></span>
<span class="c" style="left:404px">C:\Users\<i>小红书部</i>02\Downloads\<i>热门标题大字吸睛爆款小红书封</i>...</span>
<span class="c" style="left:732px">C:\Users\<i>小红书部</i>02\Downloads\<i>热门标题大字吸睛爆款小红</i>...</span>
<span class="c dt" style="left:1036px">2025-03-08 10:09:52</span>
</div>
<div class="r" style="top:543.35px">
<span class="c" style="left:3px"><i>线上演示</i></span>
<span class="c n" style="left:78px"><i>斯先生</i></span>
<span class="c" style="left:198px">Administrator</span>
<svg width="13" height="13" viewBox="0 0 13 13"><path d="M4.4 8 H2.6 C1.1 8 0.6 6.9 0.6 5.9 C0.6 4.6 1.6 3.8 2.8 3.9 C3.1 1.8 4.6 0.6 6.3 0.6 C8.1 0.6 9.4 1.8 9.7 3.6 C11.1 3.6 12.1 4.6 12.1 5.8 C12.1 7 11.1 8 9.8 8 H8.2" fill="none" stroke="#3f82b8" stroke-width="1.15"/><path d="M6.3 5.8 V10" stroke="#8b9aa8" stroke-width="1.1"/><path d="M4.3 9.4 H8.3 L6.3 11.9 Z" fill="#8b9aa8"/></svg><span class="c" style="left:318px"><i>下载</i></span>
<span class="c" style="left:404px">C:\Users\Administrator\Desktop\<i>素材</i>\3.8.jpg.crdownload</span>
<span class="c" style="left:732px">C:\Users\Administrator\Desktop\<i>素材</i>\3.8.jpg</span>
<span class="c dt" style="left:1036px">2025-03-08 10:09:25</span>
</div>
<div class="r alt" style="top:566.54px">
<span class="c" style="left:3px"><i>线上演示</i></span>
<span class="c n" style="left:78px"><i>玲玲</i></span>
<span class="c" style="left:198px">admin</span>
<svg width="13" height="13" viewBox="0 0 13 13"><path d="M4.4 8 H2.6 C1.1 8 0.6 6.9 0.6 5.9 C0.6 4.6 1.6 3.8 2.8 3.9 C3.1 1.8 4.6 0.6 6.3 0.6 C8.1 0.6 9.4 1.8 9.7 3.6 C11.1 3.6 12.1 4.6 12.1 5.8 C12.1 7 11.1 8 9.8 8 H8.2" fill="none" stroke="#3f82b8" stroke-width="1.15"/><path d="M6.3 5.8 V10" stroke="#8b9aa8" stroke-width="1.1"/><path d="M4.3 9.4 H8.3 L6.3 11.9 Z" fill="#8b9aa8"/></svg><span class="c" style="left:318px"><i>下载</i></span>
<span class="c" style="left:404px">C:\Users\admin\Downloads\<i>未确认</i> 532165.crdownload</span>
<span class="c" style="left:732px;letter-spacing:-0.1px">C:\Users\admin\Downloads\notepad_share_encrypt.hdoc....</span>
<span class="c dt" style="left:1036px">2025-03-08 10:03:37</span>
</div>
<div class="r" style="top:589.73px">
<span class="c" style="left:3px"><i>线上演示</i></span>
<span class="c n" style="left:78px"><i>玲玲</i></span>
<span class="c" style="left:198px">admin</span>
<svg width="13" height="13" viewBox="0 0 13 13"><path d="M4.4 8 H2.6 C1.1 8 0.6 6.9 0.6 5.9 C0.6 4.6 1.6 3.8 2.8 3.9 C3.1 1.8 4.6 0.6 6.3 0.6 C8.1 0.6 9.4 1.8 9.7 3.6 C11.1 3.6 12.1 4.6 12.1 5.8 C12.1 7 11.1 8 9.8 8 H8.2" fill="none" stroke="#3f82b8" stroke-width="1.15"/><path d="M6.3 5.8 V10" stroke="#8b9aa8" stroke-width="1.1"/><path d="M4.3 9.4 H8.3 L6.3 11.9 Z" fill="#8b9aa8"/></svg><span class="c" style="left:318px"><i>下载</i></span>
<span class="c" style="left:404px">C:\Users\admin\Downloads\<i>未确认</i> 711458.crdownload</span>
<span class="c" style="left:732px;letter-spacing:-0.1px">C:\Users\admin\Downloads\notepad_share_encrypt.hdoc....</span>
<span class="c dt" style="left:1036px">2025-03-08 10:03:35</span>
</div>
<div class="r alt" style="top:612.92px">
<span class="c" style="left:3px"><i>线上演示</i></span>
<span class="c n" style="left:78px"><i>玲玲</i></span>
<span class="c" style="left:198px">admin</span>
<svg width="13" height="13" viewBox="0 0 13 13"><path d="M4.4 8 H2.6 C1.1 8 0.6 6.9 0.6 5.9 C0.6 4.6 1.6 3.8 2.8 3.9 C3.1 1.8 4.6 0.6 6.3 0.6 C8.1 0.6 9.4 1.8 9.7 3.6 C11.1 3.6 12.1 4.6 12.1 5.8 C12.1 7 11.1 8 9.8 8 H8.2" fill="none" stroke="#3f82b8" stroke-width="1.15"/><path d="M6.3 5.8 V10" stroke="#8b9aa8" stroke-width="1.1"/><path d="M4.3 9.4 H8.3 L6.3 11.9 Z" fill="#8b9aa8"/></svg><span class="c" style="left:318px"><i>下载</i></span>
<span class="c" style="left:404px">C:\Users\admin\Downloads\<i>未确认</i> 179074.crdownload</span>
<span class="c" style="left:732px;letter-spacing:-0.1px">C:\Users\admin\Downloads\notepad_share_encrypt.hdoc...</span>
<span class="c dt" style="left:1036px">2025-03-08 10:03:30</span>
</div>
<div class="r" style="top:636.11px">
<span class="c" style="left:3px"><i>线上演示</i></span>
<span class="c n" style="left:78px"><i>斯先生</i></span>
<span class="c" style="left:198px">Administrator</span>
<svg width="13" height="14" viewBox="0 0 13 14"><path d="M1.6 3.4 H10.8 M4.1 3.3 C4.1 1.8 5 1.1 6.2 1.1 C7.4 1.1 8.3 1.8 8.3 3.3 M2.6 3.6 L3.6 12.4 H8.8 L9.8 3.6" fill="none" stroke="#8a8a8a" stroke-width="1.1"/></svg><span class="c" style="left:318px"><i>删除</i></span>
<span class="c" style="left:404px">C:\Users\Administrator\AppData\Roaming\Microsoft\Windo...</span>
<span class="c" style="left:732px"></span>
<span class="c dt" style="left:1036px">2025-03-08 10:00:00</span>
</div>
<div class="r alt" style="top:659.30px">
<span class="c" style="left:3px"><i>线上演示</i></span>
<span class="c n" style="left:78px"><i>斯先生</i></span>
<span class="c" style="left:198px">Administrator</span>
<svg width="13" height="14" viewBox="0 0 13 14"><path d="M1.6 3.4 H10.8 M4.1 3.3 C4.1 1.8 5 1.1 6.2 1.1 C7.4 1.1 8.3 1.8 8.3 3.3 M2.6 3.6 L3.6 12.4 H8.8 L9.8 3.6" fill="none" stroke="#8a8a8a" stroke-width="1.1"/></svg><span class="c" style="left:318px"><i>删除</i></span>
<span class="c" style="left:404px">C:\Users\Administrator\AppData\Roaming\Microsoft\Windo...</span>
<span class="c" style="left:732px"></span>
<span class="c dt" style="left:1036px">2025-03-08 10:00:00</span>
</div>
<div class="r" style="top:682.49px">
<span class="c" style="left:3px"><i>线上演示</i></span>
<span class="c n" style="left:78px">1212</span>
<span class="c" style="left:198px">admin</span>
<svg width="13" height="14" viewBox="0 0 13 14"><path d="M1.6 3.4 H10.8 M4.1 3.3 C4.1 1.8 5 1.1 6.2 1.1 C7.4 1.1 8.3 1.8 8.3 3.3 M2.6 3.6 L3.6 12.4 H8.8 L9.8 3.6" fill="none" stroke="#8a8a8a" stroke-width="1.1"/></svg><span class="c" style="left:318px"><i>删除</i></span>
<span class="c" style="left:404px">D:\<i>思源黑体优化版</i>\<i>文章资料</i></span>
<span class="c" style="left:732px;letter-spacing:-0.34px">D:\$RECYCLE.BIN\S-1-5-21-2703651835-3881249709-758...</span>
<span class="c dt" style="left:1036px">2025-03-08 09:56:33</span>
</div>
<!-- pager -->
<div class="a" style="left:0;top:703px;width:1242px;height:16px;background:#fff"></div>
<svg class="ic" style="left:1px;top:706px" width="36" height="8" viewBox="0 0 36 8">
 <g fill="#c4c4c4"><rect x="1" y="1.8" width="0.9" height="4.6"/><path d="M5 1.8 V6.2 L2.4 4 Z M8.2 1.8 V6.2 L5.6 4 Z"/><path d="M18.4 1.8 V6.2 L15.8 4 Z M21.6 1.8 V6.2 L19 4 Z"/><path d="M34.2 1.8 V6.2 L31.6 4 Z"/></g>
</svg>
<span class="a" style="left:54.5px;top:704px;font-size:11.3px;line-height:15px;color:#444">记录 1 of 71836</span>
<svg class="ic" style="left:154px;top:706px" width="34" height="8" viewBox="0 0 34 8">
 <g fill="#4a4a4a"><path d="M2 1.8 V6.2 L4.6 4 Z"/><path d="M13.2 1.8 V6.2 L15.8 4 Z M16.4 1.8 V6.2 L19 4 Z"/><path d="M25 1.8 V6.2 L27.6 4 Z M28.2 1.8 V6.2 L30.8 4 Z"/><rect x="31.3" y="1.6" width="0.9" height="4.8"/></g>
</svg>
<!-- status bar -->
<div class="a" style="left:0;top:719.6px;width:1242px;height:21.4px;background:#116ebf"></div>
<div class="a" style="left:0;top:719.6px;width:1242px;height:1.2px;background:#0f5aa3"></div>
<div class="a" style="left:0;top:739.8px;width:1242px;height:1.2px;background:#84bad6"></div>
<span class="a" style="left:6px;top:723.5px;font-size:10.5px;line-height:14px;color:#fff">就绪</span>
<svg class="ic" style="left:1085px;top:722px" width="14" height="16" viewBox="0 0 14 16">
 <path d="M7 1 V11 M2.5 6.8 L7 11.3 L11.5 6.8" fill="none" stroke="#5cb85c" stroke-width="1.8"/>
 <rect x="1" y="13.5" width="12" height="1.6" fill="#5cb85c"/>
</svg>
<span class="a" style="left:1104px;top:723.5px;font-size:10.35px;line-height:14px;color:#fff">任务中心</span>
<svg class="ic" style="left:1159px;top:724px" width="14" height="11" viewBox="0 0 14 11">
 <rect x="0.5" y="1" width="12.5" height="9.3" fill="#fff"/>
 <rect x="10" y="0.3" width="3.5" height="3.3" fill="#116ebf"/><rect x="10.6" y="0.8" width="2.4" height="2.3" fill="#fff"/>
 <line x1="2" y1="6.5" x2="11.5" y2="6.5" stroke="#aaa" stroke-width="0.8"/><line x1="2" y1="8.2" x2="11.5" y2="8.2" stroke="#aaa" stroke-width="0.8"/>
</svg>
<span class="a" style="left:1177.5px;top:723.5px;font-size:10.35px;line-height:14px;color:#fff">2条未读信息</span>
</body></html>
